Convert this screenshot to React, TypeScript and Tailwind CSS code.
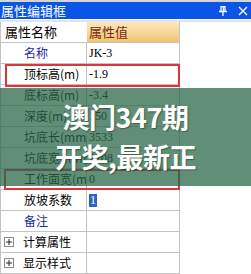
import React from 'react'

type Row = {
  name: string
  value: string
  blue?: boolean
  group?: boolean
  selected?: boolean
}

const rows: Row[] = [
  { name: '名称', value: 'JK-3', blue: true },
  { name: '顶标高(m)', value: '-1.9' },
  { name: '底标高(m)', value: '-3.4' },
  { name: '深度(m)', value: '150' },
  { name: '坑底长(mm)', value: '3533' },
  { name: '坑底宽(mm)', value: '2708' },
  { name: '工作面宽(mm)', value: '0' },
  { name: '放坡系数', value: '1', selected: true },
  { name: '备注', value: '', blue: true },
  { name: '计算属性', value: '', group: true },
  { name: '显示样式', value: '', group: true },
]

const cjk = { fontFamily: '"Noto Sans CJK SC", "Noto Sans", sans-serif' }

function PlusBox() {
  return (
    <span className="flex h-[10px] w-[10px] items-center justify-center border border-[#8a8a8a] bg-white">
      <svg width="8" height="8" viewBox="0 0 8 8" aria-hidden>
        <path d="M1 4h6M4 1v6" stroke="#222" strokeWidth="1" />
      </svg>
    </span>
  )
}

export default function App() {
  return (
    <div
      className="relative h-[274px] w-[251px] overflow-hidden bg-white text-[12px] text-black"
      style={cjk}
    >
      {/* title bar */}
      <div className="h-[2px] bg-[#d4d4d4]" />
      <div className="flex h-[17px] items-center justify-between bg-[#0a55e6] pl-[1px] pr-[3px] text-[13px] leading-none text-white">
        <span>属性编辑框</span>
        <div className="flex items-center gap-[11px]">
          <svg width="8" height="10" viewBox="0 0 8 10" aria-hidden>
            <path d="M2 0.5h4v5H2zM0 5.5h8M4 5.5v4.5" stroke="#fff" strokeWidth="1.3" fill="none" />
            <path d="M4.3 1v4" stroke="#fff" strokeWidth="1.2" />
          </svg>
          <svg width="10" height="10" viewBox="0 0 10 10" aria-hidden>
            <path d="M1 1l8 8M9 1l-8 8" stroke="#fff" strokeWidth="1.3" />
          </svg>
        </div>
      </div>
      <div className="h-[3px] border-t border-white bg-[#e4e4e4]" />

      {/* grid */}
      <div className="w-[180px] border-l border-r border-[#c4c4c4]">
        <div className="grid h-[21px] grid-cols-[86px_1fr] border-b border-[#c4c4c4]">
          <div className="flex items-center pl-[4px] text-[13px]">属性名称</div>
          <div className="flex items-center bg-gradient-to-b from-[#fde8c0] to-[#f1c46e] pl-[2px] text-[13px] text-[#7a2810]">
            属性值
          </div>
        </div>
        {rows.map((r) => (
          <div
            key={r.name}
            className="grid h-[21px] grid-cols-[86px_1fr] border-b border-[#c4c4c4]"
          >
            <div className="flex items-center overflow-hidden whitespace-nowrap border-r border-[#c4c4c4]">
              {r.group ? (
                <div className="flex items-center gap-[9px] pl-[3px]">
                  <PlusBox />
                  <span>{r.name}</span>
                </div>
              ) : (
                <span className={r.blue ? 'pl-[23px] text-[#1a2a9c]' : 'pl-[23px]'}>{r.name}</span>
              )}
            </div>
            <div
              className="flex items-center pl-[2px]"
              style={{ fontFamily: '"Liberation Serif", serif' }}
            >
              {r.selected ? (
                <span className="bg-[#2f62c8] px-[1px] leading-[13px] text-white">{r.value}</span>
              ) : (
                <span>{r.value}</span>
              )}
            </div>
          </div>
        ))}
      </div>

      {/* red highlight boxes */}
      <div className="absolute left-[5px] top-[64px] h-[23px] w-[175px] border-2 border-[#d8383c]" />
      <div className="absolute left-[4px] top-[169px] h-[21px] w-[176px] border-2 border-[#d8383c]" />

      {/* green banner */}
      <div className="absolute left-0 top-[88px] flex h-[98px] w-full flex-col items-center justify-center bg-[rgba(40,102,72,0.74)]">
        <p
          className="text-[27px] font-bold leading-[40px] tracking-[-0.5px] text-white"
          style={{ textShadow: '1px 1px 1px rgba(0,0,0,0.35)' }}
        >
          澳门347期
        </p>
        <p
          className="text-[27px] font-bold leading-[40px] tracking-[-0.5px] text-white"
          style={{ textShadow: '1px 1px 1px rgba(0,0,0,0.35)' }}
        >
          开奖,最新正
        </p>
      </div>
    </div>
  )
}
